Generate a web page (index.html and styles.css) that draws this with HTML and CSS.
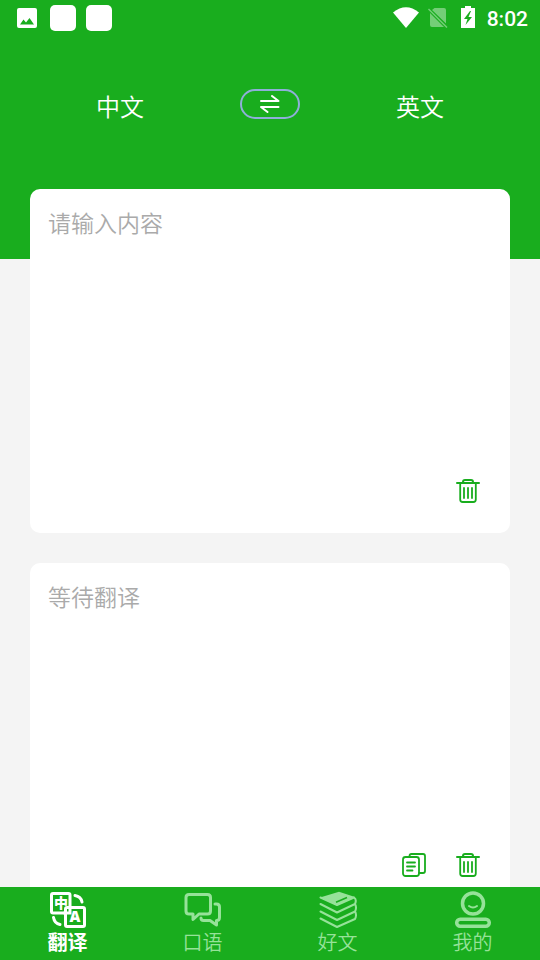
FILE: index.html
```html
<!DOCTYPE html>
<html lang="zh-CN">
<head>
<meta charset="utf-8">
<meta name="viewport" content="width=device-width, initial-scale=1">
<title>翻译</title>
<link rel="stylesheet" href="styles.css">
</head>
<body>
<svg class="sprite" aria-hidden="true">
  <symbol id="trash" viewBox="0 0 24 24">
    <g fill="none" stroke="currentColor" stroke-linecap="round">
      <path stroke-width="2" d="M1 4H23"/>
      <path stroke-width="2" d="M7 4V3Q7 1 9 1H15Q17 1 17 3V4"/>
      <path stroke-width="1.800" d="M4.200 4V20.500Q4.200 23 6.700 23H17.300Q19.800 23 19.800 20.500V4"/>
      <path stroke-width="1.800" d="M8 9V19M12 9V19M16 9V19"/>
    </g>
  </symbol>
  <symbol id="copy" viewBox="0 0 24 24">
    <g fill="none" stroke="currentColor" stroke-width="1.800" stroke-linecap="round" stroke-linejoin="round">
      <rect x="1" y="4" width="16" height="19" rx="2.500"/>
      <path d="M7.500 4V3Q7.500 1 9.500 1H21Q23 1 23 3V18Q23 20 21 20H17"/>
      <path d="M5 9.500H13M5 13.500H13M5 17.500H10.500"/>
    </g>
  </symbol>
</svg>
<main class="screen">
  <header class="top">
    <div class="status">
      <svg class="status-photo" viewBox="0 0 20 20" aria-hidden="true"><path fill="#fff" fill-rule="evenodd" d="M2 0H18Q20 0 20 2V18Q20 20 18 20H2Q0 20 0 18V2Q0 0 2 0ZM3 16.500H17L12.500 10L9 14.500L6.500 11.500Z"/></svg>
      <span class="status-app"></span>
      <span class="status-app"></span>
      <svg class="status-wifi" viewBox="0 0 26 22" aria-hidden="true"><path fill="#fff" d="M0 5.500Q13 -5 26 5.500L13 21Z"/></svg>
      <svg class="status-sim" viewBox="0 0 20 20" aria-hidden="true"><g fill="#74ce77"><path d="M6.500 0H16Q18 0 18 2V15.500L4 2ZM2 5L16 19H4Q2 19 2 17Z"/><path stroke="#74ce77" stroke-width="1.500" d="M.5 1L19 19.500"/></g></svg>
      <svg class="status-battery" viewBox="0 0 14 22" aria-hidden="true"><path fill="#fff" fill-rule="evenodd" d="M4 0H10V2H14V22H0V2H4ZM9 5L3 13H6.500L4.500 19L11 11H7.500L10 5Z"/></svg>
      <time class="clock">8:02</time>
    </div>
    <div class="languages">
      <button class="language" type="button">中文</button>
      <button class="swap" type="button" aria-label="交换语言">
        <svg viewBox="0 0 20 18" aria-hidden="true"><path fill="none" stroke="#fff" stroke-width="2" stroke-linecap="round" stroke-linejoin="round" d="M1 6H18.500L12 1M18.500 12H1L7.500 17"/></svg>
      </button>
      <button class="language" type="button">英文</button>
    </div>
  </header>
  <div class="cards">
    <section class="card">
      <textarea class="text" aria-label="原文" placeholder="请输入内容"></textarea>
      <div class="actions">
        <button class="action" type="button" aria-label="清空原文"><svg><use href="#trash"/></svg></button>
      </div>
    </section>
    <section class="card">
      <textarea class="text" aria-label="译文" placeholder="等待翻译" readonly></textarea>
      <div class="actions">
        <button class="action" type="button" aria-label="复制译文"><svg><use href="#copy"/></svg></button>
        <button class="action" type="button" aria-label="清空译文"><svg><use href="#trash"/></svg></button>
      </div>
    </section>
  </div>
</main>
<nav class="tabs">
  <a class="tab active" href="#translate" aria-current="page">
    <svg viewBox="0 0 38 38" aria-hidden="true">
      <g fill="none" stroke="currentColor" stroke-width="3">
        <path stroke-linejoin="round" d="M15.500 22H4Q2.500 22 2.500 20.500V4Q2.500 2.500 4 2.500H19.500Q21 2.500 21 4V15.500"/>
        <path d="M14.500 22H21V15.500"/>
        <rect x="16.500" y="16.500" width="19" height="19" rx="1.500"/>
        <path stroke-linecap="round" d="M26 4.500Q32 5.500 33 11M4.500 26.500Q5.500 32.500 11 33.500"/>
      </g>
      <text class="glyph" x="12" y="17" text-anchor="middle">中</text>
      <text class="glyph latin" x="26" y="31" text-anchor="middle">A</text>
    </svg>
    <span>翻译</span>
  </a>
  <a class="tab" href="#speaking">
    <svg viewBox="0 0 38 38" aria-hidden="true"><g fill="none" stroke="currentColor" stroke-width="3" stroke-linejoin="round" stroke-linecap="round"><path d="M5 3.500H23.500Q26.500 3.500 26.500 6.500V20Q26.500 23 23.500 23H15L9 28.500V23H5Q2 23 2 20V6.500Q2 3.500 5 3.500Z"/><path d="M31 13H32.500Q35.500 13 35.500 16V26.500Q35.500 29.500 32.500 29.500V34L26 29.500H19.500Q17 29.500 17 27"/></g></svg>
    <span>口语</span>
  </a>
  <a class="tab" href="#articles">
    <svg viewBox="0 0 38 38" aria-hidden="true"><path fill="currentColor" d="M1 6.500L20 .7L36 6L18 14.500Z"/><g fill="none" stroke="currentColor" stroke-width="2" stroke-linejoin="round" stroke-linecap="round"><path d="M1.500 6.500L18 14L35 6.500Q38 8.500 36 13L18 21.500L1.500 13M36 13Q38 16.500 36 20.500L18 29L1.500 20.500M36 20.500Q38 24 36 28L18 36L1.500 27.500"/></g><path stroke="#19ad1e" stroke-width="1.600" d="M17 11.300L28 6.500"/></svg>
    <span>好文</span>
  </a>
  <a class="tab" href="#mine">
    <svg viewBox="0 0 38 38" aria-hidden="true"><g fill="none" stroke="currentColor" stroke-width="3.500" stroke-linecap="round"><circle cx="19" cy="12.500" r="10.500"/><rect x="2.700" y="28.200" width="32.600" height="7" rx="3.500"/><path stroke-width="2" d="M15 15Q19 18 23 15"/></g></svg>
    <span>我的</span>
  </a>
</nav>
</body>
</html>
```
FILE: styles.css
```css
* {
  box-sizing: border-box;
}

body {
  margin: 0;
  height: 100vh;
  display: flex;
  flex-direction: column;
  background: #f4f4f4;
  font-family: "Noto Sans CJK SC", sans-serif;
  font-weight: 350;
}

button {
  padding: 0;
  border: 0;
  background: none;
  color: inherit;
  font: inherit;
}

svg {
  display: block;
  flex: none;
}

.sprite {
  position: absolute;
  width: 0;
  height: 0;
}

.screen {
  flex: 1;
  min-height: 0;
  overflow: hidden;
}

.top {
  padding-bottom: 140px;
  background: #19ad1e;
  color: #fff;
}

.status {
  display: flex;
  align-items: center;
  height: 36px;
  padding: 0 12px 0 17px;
}

.status-photo {
  width: 20px;
  height: 20px;
  margin-right: 13px;
}

.status-app {
  width: 26px;
  height: 26px;
  margin-right: 10px;
  border-radius: 5px;
  background: #fff;
}

.status-wifi {
  width: 26px;
  height: 22px;
  margin-left: auto;
}

.status-sim {
  width: 20px;
  height: 20px;
  margin: 0 13px 0 9px;
}

.status-battery {
  width: 14px;
  height: 22px;
  margin-bottom: 2px;
}

.clock {
  margin-left: 12px;
  padding-top: 2px;
  font: 500 21px/24px Roboto, sans-serif;
}

.languages {
  display: flex;
  align-items: center;
  margin-top: 53px;
  height: 30px;
}

.language {
  flex: 1;
  padding-top: 4px;
  font-size: 24px;
  line-height: 30px;
}

.swap {
  display: flex;
  align-items: center;
  justify-content: center;
  width: 60px;
  height: 30px;
  border: 2px solid #8fafd9;
  border-radius: 15px;
}

.swap svg {
  width: 20px;
  height: 18px;
}

.cards {
  display: grid;
  gap: 30px;
  margin-top: -70px;
  padding: 0 30px 30px;
}

.card {
  display: flex;
  flex-direction: column;
  min-height: 344px;
  padding: 18px 30px 30px 18px;
  border-radius: 10px;
  background: #fff;
}

.text {
  flex: 1;
  width: 100%;
  padding: 0;
  border: 0;
  outline: 0;
  resize: none;
  background: none;
  color: #333;
  font: 350 23px/30px "Noto Sans CJK SC", sans-serif;
}

.text::placeholder {
  color: #aaa;
  opacity: 1;
}

.actions {
  display: flex;
  justify-content: flex-end;
  gap: 30px;
  color: #19ad1e;
}

.action svg {
  width: 24px;
  height: 24px;
}

.tabs {
  display: flex;
  height: 73px;
  background: #19ad1e;
}

.tab {
  flex: 1;
  display: flex;
  flex-direction: column;
  align-items: center;
  padding-top: 4px;
  color: #96e299;
  font-size: 20px;
  line-height: 26px;
  text-decoration: none;
}

.tab svg {
  width: 38px;
  height: 38px;
}

.tab.active {
  color: #fff;
  font-weight: 700;
}

.glyph {
  fill: currentColor;
  font-size: 14px;
  font-weight: 900;
}

.latin {
  font-family: "Open Sans", sans-serif;
  font-size: 15px;
}
```
